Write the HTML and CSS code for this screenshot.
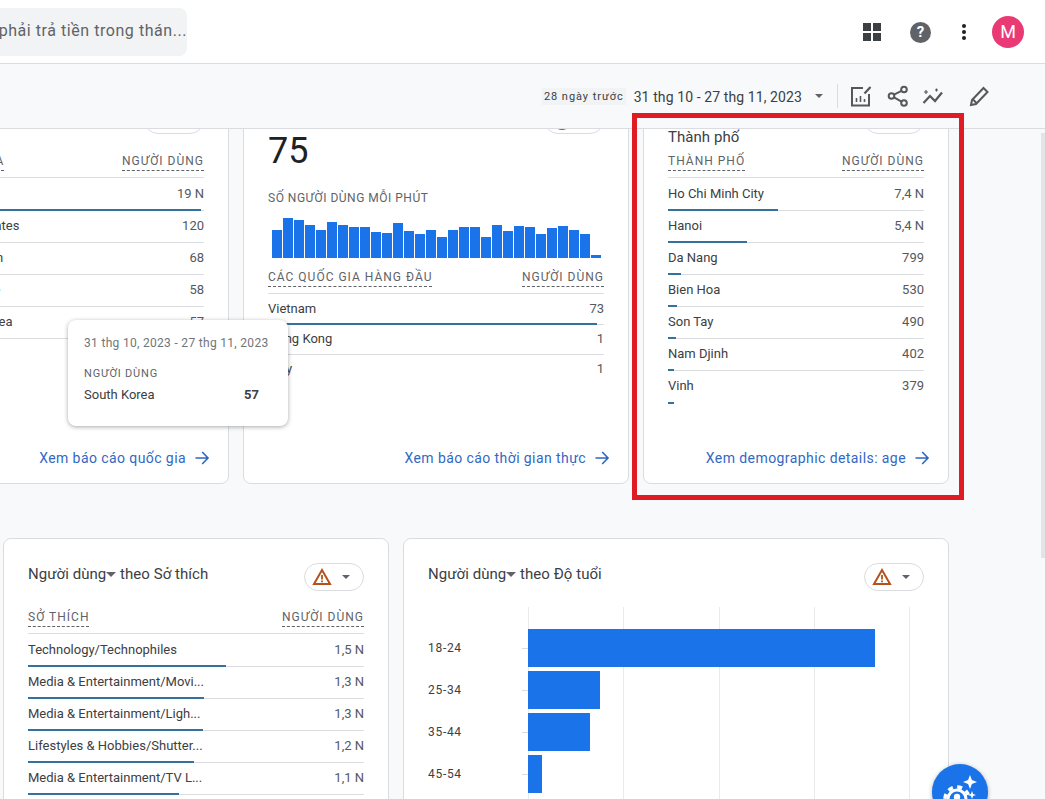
FILE: index.html
```html
<!doctype html>
<html lang="vi">
<head>
    <meta charset="UTF-8">
    <title>Analytics</title>
    <link rel="stylesheet" href="styles.css">
</head>
<body>
<svg class="sprites" width="0" height="0">
    <symbol id="warn" viewBox="0 0 20 20">
        <path d="M10 3 18 17H2z" fill="none" stroke="#b5521b" stroke-width="2" stroke-linejoin="miter"/>
        <path d="M9.1 8h1.800v4.500H9.100zM9.100 13.400h1.800v1.800H9.100z" fill="#b5521b"/>
    </symbol>
    <symbol id="okdot" viewBox="0 0 20 20">
        <circle cx="10" cy="11" r="8" fill="none" stroke="#1a73e8" stroke-width="2"/>
    </symbol>
    <symbol id="arrow" viewBox="0 0 16 16">
        <path d="M1.500 8h12.500M8.200 2 14 8l-5.800 6" fill="none" stroke="#2f66c4" stroke-width="1.600"/>
    </symbol>
</svg>

<header class="topbar">
    <div class="search"><span>Người dùng phải trả tiền trong thán...</span></div>
    <div class="topicons">
        <svg class="grid-ic" width="20" height="20" viewBox="0 0 20 20" fill="#3c4043">
            <rect x="1" y="1" width="8" height="8"/><rect x="11" y="1" width="8" height="8"/>
            <rect x="1" y="11" width="8" height="8"/><rect x="11" y="11" width="8" height="8"/>
        </svg>
        <div class="help">?</div>
        <svg class="dots" width="6" height="18" viewBox="0 0 6 18" fill="#202124">
            <circle cx="3" cy="3" r="2"/><circle cx="3" cy="9" r="2"/><circle cx="3" cy="15" r="2"/>
        </svg>
        <div class="avatar">M</div>
    </div>
</header>

<div class="toolbar">
    <span class="chip">28 ngày trước</span>
    <span class="range">31 thg 10 - 27 thg 11, 2023</span>
    <span class="caret"></span>
    <span class="vsep"></span>
    <svg class="t-ic report" width="22" height="22" viewBox="0 0 22 22" fill="none" stroke="#55585c" stroke-width="2">
        <path d="M13 3H2v17.500h17V9"/>
        <path d="M6.500 17v-4M10.500 17v-6M14.500 17v-3" stroke-width="1.600"/>
        <path d="M14.500 8.500 20.500 2" stroke-width="2.200"/>
    </svg>
    <svg class="t-ic share" width="22" height="22" viewBox="0 0 22 22" fill="none" stroke="#55585c" stroke-width="2">
        <circle cx="17" cy="4.500" r="2.800"/><circle cx="4.500" cy="11" r="2.800"/><circle cx="17" cy="18" r="2.800"/>
        <path d="M7 9.700 14.500 5.800M7 12.400l7.500 4.300"/>
    </svg>
    <svg class="t-ic" width="24" height="22" viewBox="0 0 24 22" fill="none" stroke="#55585c" stroke-width="2.200">
        <path d="M1.500 18 8 11l5 5 7-8.500"/>
        <path d="M2 7h4M4 5v4M13 5h3M14.500 3.500v3" stroke-width="1.200"/>
    </svg>
    <svg class="t-ic pencil" width="20" height="22" viewBox="0 0 20 22" fill="none" stroke="#55585c" stroke-width="2">
        <path d="M2 20l1-5L14.500 3l4 4L7 19z"/>
        <path d="M4 14.500l3.500 3.500"/>
    </svg>
</div>

<main class="content">
    <div class="row row-top">
        <section class="card w312">
            <div class="card-head two-line">
                <div class="title narrow">Người dùng theo<br>Quốc gia</div>
                <div class="pill"><svg width="20" height="20"><use href="#warn"/></svg><span class="caret"></span></div>
            </div>
            <div class="thead"><span class="th">QUỐC GIA</span><span class="th">NGƯỜI DÙNG</span></div>
            <div class="trow"><span>Vietnam</span><span>19 N</span><i style="width:99%"></i></div>
            <div class="trow"><span>United States</span><span>120</span><i style="width:2%"></i></div>
            <div class="trow"><span>Azerbaijan</span><span>68</span><i style="width:1%"></i></div>
            <div class="trow"><span>Singapore</span><span>58</span><i style="width:1%"></i></div>
            <div class="trow"><span>South Korea</span><span>57</span><i style="width:1%"></i></div>
            <a class="more">Xem báo cáo quốc gia <svg width="16" height="16"><use href="#arrow"/></svg></a>
        </section>

        <section class="card w386">
            <div class="card-head">
                <div class="title">Số người dùng trong 30 phút qua</div>
                <div class="pill"><svg width="20" height="20"><use href="#okdot"/></svg><span class="caret"></span></div>
            </div>
            <div class="bigno">75</div>
            <div class="sub">SỐ NGƯỜI DÙNG MỖI PHÚT</div>
            <div class="spark" id="spark"></div>
            <div class="thead"><span class="th">CÁC QUỐC GIA HÀNG ĐẦU</span><span class="th">NGƯỜI DÙNG</span></div>
            <div class="trow r-tight"><span>Vietnam</span><span>73</span><i style="width:98%"></i></div>
            <div class="trow r-tight"><span>Hong Kong</span><span>1</span></div>
            <div class="trow r-tight last"><span>Italy</span><span>1</span></div>
            <a class="more">Xem báo cáo thời gian thực <svg width="16" height="16"><use href="#arrow"/></svg></a>
        </section>

        <section class="card w306">
            <div class="card-head two-line">
                <div class="title">Người dùng theo<br>Thành phố</div>
                <div class="pill"><svg width="20" height="20"><use href="#warn"/></svg><span class="caret"></span></div>
            </div>
            <div class="thead"><span class="th">THÀNH PHỐ</span><span class="th">NGƯỜI DÙNG</span></div>
            <div class="trow"><span>Ho Chi Minh City</span><span>7,4 N</span><i style="width:43%"></i></div>
            <div class="trow"><span>Hanoi</span><span>5,4 N</span><i style="width:31%"></i></div>
            <div class="trow"><span>Da Nang</span><span>799</span><i style="width:5%"></i></div>
            <div class="trow"><span>Bien Hoa</span><span>530</span><i style="width:3.5%"></i></div>
            <div class="trow"><span>Son Tay</span><span>490</span><i style="width:3%"></i></div>
            <div class="trow"><span>Nam Djinh</span><span>402</span><i style="width:2.5%"></i></div>
            <div class="trow last"><span>Vinh</span><span>379</span><i style="width:2.5%"></i></div>
            <a class="more">Xem demographic details: age <svg width="16" height="16"><use href="#arrow"/></svg></a>
        </section>
    </div>

    <div class="row row-bottom">
        <section class="card w386">
            <div class="card-head">
                <div class="title">Người dùng<span class="mini-caret"></span> theo Sở thích</div>
                <div class="pill"><svg width="20" height="20"><use href="#warn"/></svg><span class="caret"></span></div>
            </div>
            <div class="thead"><span class="th">SỞ THÍCH</span><span class="th">NGƯỜI DÙNG</span></div>
            <div class="trow"><span>Technology/Technophiles</span><span>1,5 N</span><i style="width:59%"></i></div>
            <div class="trow"><span>Media &amp; Entertainment/Movi...</span><span>1,3 N</span><i style="width:52.5%"></i></div>
            <div class="trow"><span>Media &amp; Entertainment/Ligh...</span><span>1,3 N</span><i style="width:52%"></i></div>
            <div class="trow"><span>Lifestyles &amp; Hobbies/Shutter...</span><span>1,2 N</span><i style="width:49.5%"></i></div>
            <div class="trow"><span>Media &amp; Entertainment/TV L...</span><span>1,1 N</span><i style="width:45%"></i></div>
        </section>

        <section class="card wide">
            <div class="card-head">
                <div class="title">Người dùng<span class="mini-caret"></span> theo Độ tuổi</div>
                <div class="pill"><svg width="20" height="20"><use href="#warn"/></svg><span class="caret"></span></div>
            </div>
            <div class="chart">
                <div class="gridlines"><b></b><b></b><b></b><b></b><b></b></div>
                <div class="bar-row"><span>18-24</span><i style="width:347px"></i></div>
                <div class="bar-row"><span>25-34</span><i style="width:72px"></i></div>
                <div class="bar-row"><span>35-44</span><i style="width:62px"></i></div>
                <div class="bar-row"><span>45-54</span><i style="width:14px"></i></div>
            </div>
        </section>
    </div>
</main>

<div class="tooltip">
    <div class="tip-date">31 thg 10, 2023 - 27 thg 11, 2023</div>
    <div class="tip-label">NGƯỜI DÙNG</div>
    <div class="tip-row"><span>South Korea</span><b>57</b></div>
</div>

<div class="scrollthumb"></div>
<div class="highlight"></div>
<div class="fab">
    <svg width="56" height="56" viewBox="0 0 56 56" fill="none">
        <circle cx="25" cy="35" r="9" stroke="#fff" stroke-width="3"/>
        <circle cx="25" cy="35" r="12" stroke="#fff" stroke-width="3.5" stroke-dasharray="5 4.4"/>
        <circle cx="25" cy="33" r="3.2" fill="#fff"/>
        <path d="M19.500 41c1-3.500 10-3.500 11 0z" fill="#fff"/>
        <path d="M38 11l1.900 5.100L45 18l-5.100 1.900L38 25l-1.900-5.100L31 18l5.100-1.900z" fill="#fff"/>
        <path d="M40 27l1.100 2.900L44 31l-2.900 1.100L40 35l-1.100-2.900L36 31l2.900-1.100z" fill="#fff"/>
    </svg>
</div>

<script>
    let heights = [28, 40, 38, 33, 28, 36, 33, 31, 31, 26, 25, 35, 27, 24, 28, 21, 28, 31, 31, 21, 33, 27, 32, 31, 24, 30, 32, 28, 24, 3];
    let spark = document.getElementById("spark");
    heights.forEach(function (h) {
        let bar = document.createElement("i");
        bar.style.height = h + "px";
        spark.appendChild(bar);
    });
</script>
</body>
</html>
```

FILE: styles.css
```css
html, body {
    width: 100%;
    height: 100%;
    margin: 0;
    padding: 0;
    overflow: hidden;
}

body {
    background: #f8f9fb;
    font-family: Roboto, "Noto Sans", sans-serif;
    color: #3c4043;
    position: relative;
}

.sprites {
    position: absolute;
}

.topbar {
    height: 64px;
    box-sizing: border-box;
    background: #fff;
    border-bottom: 1px solid #dadce0;
    display: flex;
    align-items: flex-start;
    justify-content: space-between;
}

.search {
    width: 187px;
    height: 48px;
    margin-top: 8px;
    box-sizing: border-box;
    background: #f1f3f4;
    border-radius: 0 8px 8px 0;
    font-size: 16px;
    line-height: 45px;
    color: #5f6368;
    letter-spacing: .55px;
    white-space: nowrap;
    overflow: hidden;
    display: flex;
    justify-content: flex-end;
}

.search span {
    flex: none;
}

.topicons {
    display: flex;
    align-items: center;
    height: 64px;
    padding-right: 21px;
}

.grid-ic {
    margin-right: 28px;
}

.help {
    width: 21px;
    height: 21px;
    border-radius: 50%;
    background: #5f6368;
    color: #fff;
    font-size: 15px;
    font-weight: 700;
    line-height: 21px;
    text-align: center;
    margin-right: 30px;
}

.dots {
    margin-right: 25px;
}

.avatar {
    width: 32px;
    height: 32px;
    border-radius: 50%;
    background: #ea3a75;
    color: #fff;
    font-size: 18px;
    line-height: 32px;
    text-align: center;
}

.toolbar {
    height: 65px;
    box-sizing: border-box;
    background: #f8f9fb;
    border-bottom: 1px solid #dadce0;
    display: flex;
    align-items: center;
    justify-content: flex-end;
    padding: 0 56px 0 0;
    position: relative;
    z-index: 2;
}

.chip {
    font-size: 11px;
    letter-spacing: .95px;
    color: #3c4043;
    background: #f1f3f4;
    padding: 2px;
    margin-right: 8px;
}

.range {
    font-size: 14px;
    color: #3c4043;
    letter-spacing: .1px;
    margin: 2px 13px 0 0;
}

.caret {
    display: inline-block;
    width: 0;
    height: 0;
    border-left: 4.5px solid transparent;
    border-right: 4.5px solid transparent;
    border-top: 4.5px solid #5f6368;
}

.vsep {
    width: 1px;
    height: 24px;
    background: #dadce0;
    margin: 0 12px 0 14px;
}

.t-ic {
    margin-right: 14px;
    display: block;
}

.t-ic.report {
    margin-right: 15px;
}

.t-ic.share {
    margin-right: 13px;
}

.t-ic.pencil {
    margin: 0 0 0 9px;
}

.content {
    height: 670px;
    overflow: hidden;
}

.row {
    display: flex;
    gap: 14px;
}

.row-top {
    margin: -48px 0 0 -83px;
}

.row-bottom {
    margin: 54px 0 0 3px;
}

.card {
    background: #fff;
    border: 1px solid #dadce0;
    border-radius: 8px;
    box-sizing: border-box;
    padding: 24px 24px 0;
    position: relative;
    flex: none;
}

.row-top .card {
    height: 403px;
}

.row-bottom .card {
    height: 320px;
}

.w386 {
    width: 386px;
}

.w312 {
    width: 312px;
}

.w306 {
    width: 306px;
}

.wide {
    width: 546px;
}

.card-head {
    display: flex;
    justify-content: space-between;
    align-items: flex-start;
    min-height: 40px;
    margin-bottom: 3px;
}

.row-bottom .card-head {
    margin-bottom: 4px;
}

.card-head.two-line {
    margin-bottom: 4px;
}

.title {
    font-size: 15px;
    line-height: 20px;
    letter-spacing: .05px;
    color: #3c4043;
}

.row-bottom .title,
.two-line .title {
    margin-top: 1px;
}

.title.narrow {
    letter-spacing: -.4px;
}

.pill {
    width: 60px;
    height: 28px;
    box-sizing: border-box;
    border: 1px solid #dadce0;
    border-radius: 14px;
    display: flex;
    align-items: center;
    gap: 10px;
    padding-left: 7px;
    flex: none;
}

.mini-caret {
    display: inline-block;
    width: 0;
    height: 0;
    border-left: 5px solid transparent;
    border-right: 5px solid transparent;
    border-top: 5px solid #5f6368;
    vertical-align: 2px;
}

.thead {
    display: flex;
    justify-content: space-between;
    height: 27px;
    box-sizing: border-box;
    border-bottom: 1px solid #dadce0;
    padding-top: 1px;
    margin-bottom: 1px;
}

.th {
    font-size: 12px;
    letter-spacing: 1px;
    line-height: 18px;
    height: 19px;
    box-sizing: border-box;
    color: #5f6368;
    border-bottom: 1px dashed #5f6368;
    white-space: nowrap;
}

.trow {
    display: flex;
    justify-content: space-between;
    height: 32px;
    box-sizing: border-box;
    border-bottom: 1px solid #dadce0;
    font-size: 13px;
    line-height: 30px;
    color: #3c4043;
    position: relative;
    white-space: nowrap;
}

.trow span + span {
    color: #55585c;
}

.trow.last {
    border-bottom: 0;
}

.trow i {
    position: absolute;
    left: 0;
    bottom: -1px;
    height: 2px;
    background: #32729c;
}

.r-tight {
    height: 30px;
    line-height: 28px;
}

.more {
    position: absolute;
    right: 18px;
    bottom: 15px;
    font-size: 14px;
    color: #3367c4;
    letter-spacing: .42px;
    display: flex;
    align-items: center;
    gap: 8px;
    line-height: 20px;
    white-space: nowrap;
}

.bigno {
    font-size: 36px;
    line-height: 40px;
    color: #202124;
    margin-top: -18px;
}

.sub {
    font-size: 12px;
    letter-spacing: .5px;
    color: #5f6368;
    margin-top: 19px;
    line-height: 16px;
}

.spark {
    display: flex;
    align-items: flex-end;
    gap: 1px;
    height: 40px;
    margin: 12px 3px 9px 4px;
}

.spark i {
    flex: 1;
    background: #1a73e8;
}

.chart {
    position: relative;
    padding-top: 22px;
    margin-top: 3px;
}

.gridlines {
    position: absolute;
    top: 0;
    left: 100px;
    width: 382px;
    height: 300px;
    display: flex;
    justify-content: space-between;
}

.gridlines b {
    width: 1px;
    background: #e8eaed;
}

.bar-row {
    display: flex;
    align-items: center;
    height: 38px;
    margin-bottom: 4px;
    position: relative;
    font-size: 12px;
    color: #3c4043;
}

.bar-row::before {
    content: "";
    position: absolute;
    left: 94px;
    top: 19px;
    width: 6px;
    height: 1px;
    background: #dadce0;
}

.bar-row span {
    width: 100px;
    letter-spacing: .7px;
}

.bar-row i {
    height: 38px;
    background: #1a73e8;
    position: relative;
}

.tooltip {
    position: absolute;
    left: 68px;
    top: 320px;
    width: 220px;
    height: 106px;
    box-sizing: border-box;
    padding: 15px 16px 0;
    background: #fff;
    border-radius: 8px;
    box-shadow: 0 1px 4px rgba(60, 64, 67, .45);
    z-index: 2;
}

.tip-date {
    font-size: 12px;
    line-height: 16px;
    letter-spacing: .31px;
    color: #70757a;
    white-space: nowrap;
}

.tip-label {
    font-size: 11px;
    line-height: 14px;
    letter-spacing: .8px;
    color: #5f6368;
    margin-top: 16px;
}

.tip-row {
    display: flex;
    justify-content: space-between;
    font-size: 13px;
    line-height: 18px;
    color: #3c4043;
    margin-top: 5px;
    padding-right: 13px;
}

.tip-row b {
    font-weight: 700;
}

.scrollthumb {
    position: absolute;
    right: 0;
    top: 133px;
    width: 4px;
    height: 425px;
    background: #e3e4e6;
}

.highlight {
    position: absolute;
    left: 632px;
    top: 113px;
    width: 332px;
    height: 387px;
    box-sizing: border-box;
    border: 5px solid #e01b24;
    z-index: 3;
}

.fab {
    position: absolute;
    left: 932px;
    top: 764px;
    width: 56px;
    height: 56px;
    border-radius: 50%;
    background: #1a73e8;
    box-shadow: 0 1px 4px rgba(60, 64, 67, .4);
    z-index: 4;
}
```
